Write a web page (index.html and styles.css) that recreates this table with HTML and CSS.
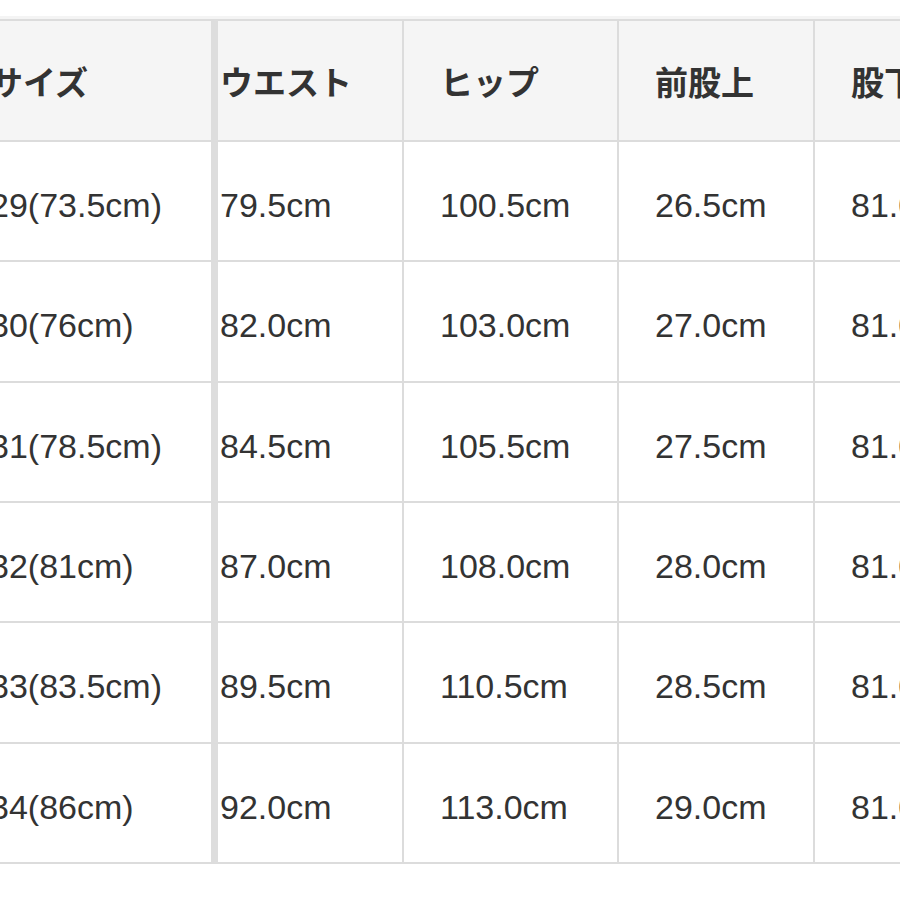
FILE: index.html
```html
<!DOCTYPE html>
<html lang="ja">
<head>
<meta charset="utf-8">
<title>サイズ表</title>
<link rel="stylesheet" href="styles.css">
</head>
<body>
<div class="wrap">
<table class="size-table">
  <colgroup>
    <col class="c1"><col class="c2"><col class="c3"><col class="c4"><col class="c5">
  </colgroup>
  <thead>
    <tr>
      <th class="first">サイズ</th>
      <th class="second">ウエスト</th>
      <th>ヒップ</th>
      <th>前股上</th>
      <th>股下</th>
    </tr>
  </thead>
  <tbody>
    <tr><td class="first">29(73.5cm)</td><td class="second">79.5cm</td><td>100.5cm</td><td>26.5cm</td><td>81.0cm</td></tr>
    <tr><td class="first">30(76cm)</td><td class="second">82.0cm</td><td>103.0cm</td><td>27.0cm</td><td>81.0cm</td></tr>
    <tr><td class="first">31(78.5cm)</td><td class="second">84.5cm</td><td>105.5cm</td><td>27.5cm</td><td>81.0cm</td></tr>
    <tr><td class="first">32(81cm)</td><td class="second">87.0cm</td><td>108.0cm</td><td>28.0cm</td><td>81.0cm</td></tr>
    <tr><td class="first">33(83.5cm)</td><td class="second">89.5cm</td><td>110.5cm</td><td>28.5cm</td><td>81.0cm</td></tr>
    <tr><td class="first">34(86cm)</td><td class="second">92.0cm</td><td>113.0cm</td><td>29.0cm</td><td>81.0cm</td></tr>
  </tbody>
</table>
</div>
</body>
</html>
```

FILE: styles.css
```css
html, body {
  margin: 0;
  padding: 0;
  background: #ffffff;
}

body {
  width: 900px;
  height: 900px;
  overflow: hidden;
  font-family: "Liberation Sans", "Noto Sans CJK JP", sans-serif;
  color: #333333;
}

.wrap {
  padding-top: 19px;
  margin-left: -46px;
}

.size-table {
  border-collapse: separate;
  border-spacing: 0;
  table-layout: fixed;
  width: 1061px;
}

.c1 { width: 264px; }
.c2 { width: 186px; }
.c3 { width: 215px; }
.c4 { width: 196px; }
.c5 { width: 200px; }

.size-table th,
.size-table td {
  box-sizing: border-box;
  text-align: left;
  white-space: nowrap;
  overflow: hidden;
  padding: 0 0 0 36px;
  border-right: 2px solid #dcdcdc;
  border-bottom: 2px solid #dcdcdc;
  vertical-align: middle;
}

.size-table th {
  height: 123px;
  border-top: 2px solid #dcdcdc;
  background: #f5f5f5;
  font-family: "Noto Sans CJK JP", sans-serif;
  font-weight: 700;
  font-size: 33px;
  color: #333333;
  box-shadow: 0 -3px 0 #f4f4f4;
}

.size-table td {
  height: 120.33px;
  padding-top: 9px;
  font-size: 34px;
  color: #333333;
}

.size-table .first {
  border-right: 7px solid #dddddd;
}

.size-table .second {
  padding-left: 2px;
}
```
